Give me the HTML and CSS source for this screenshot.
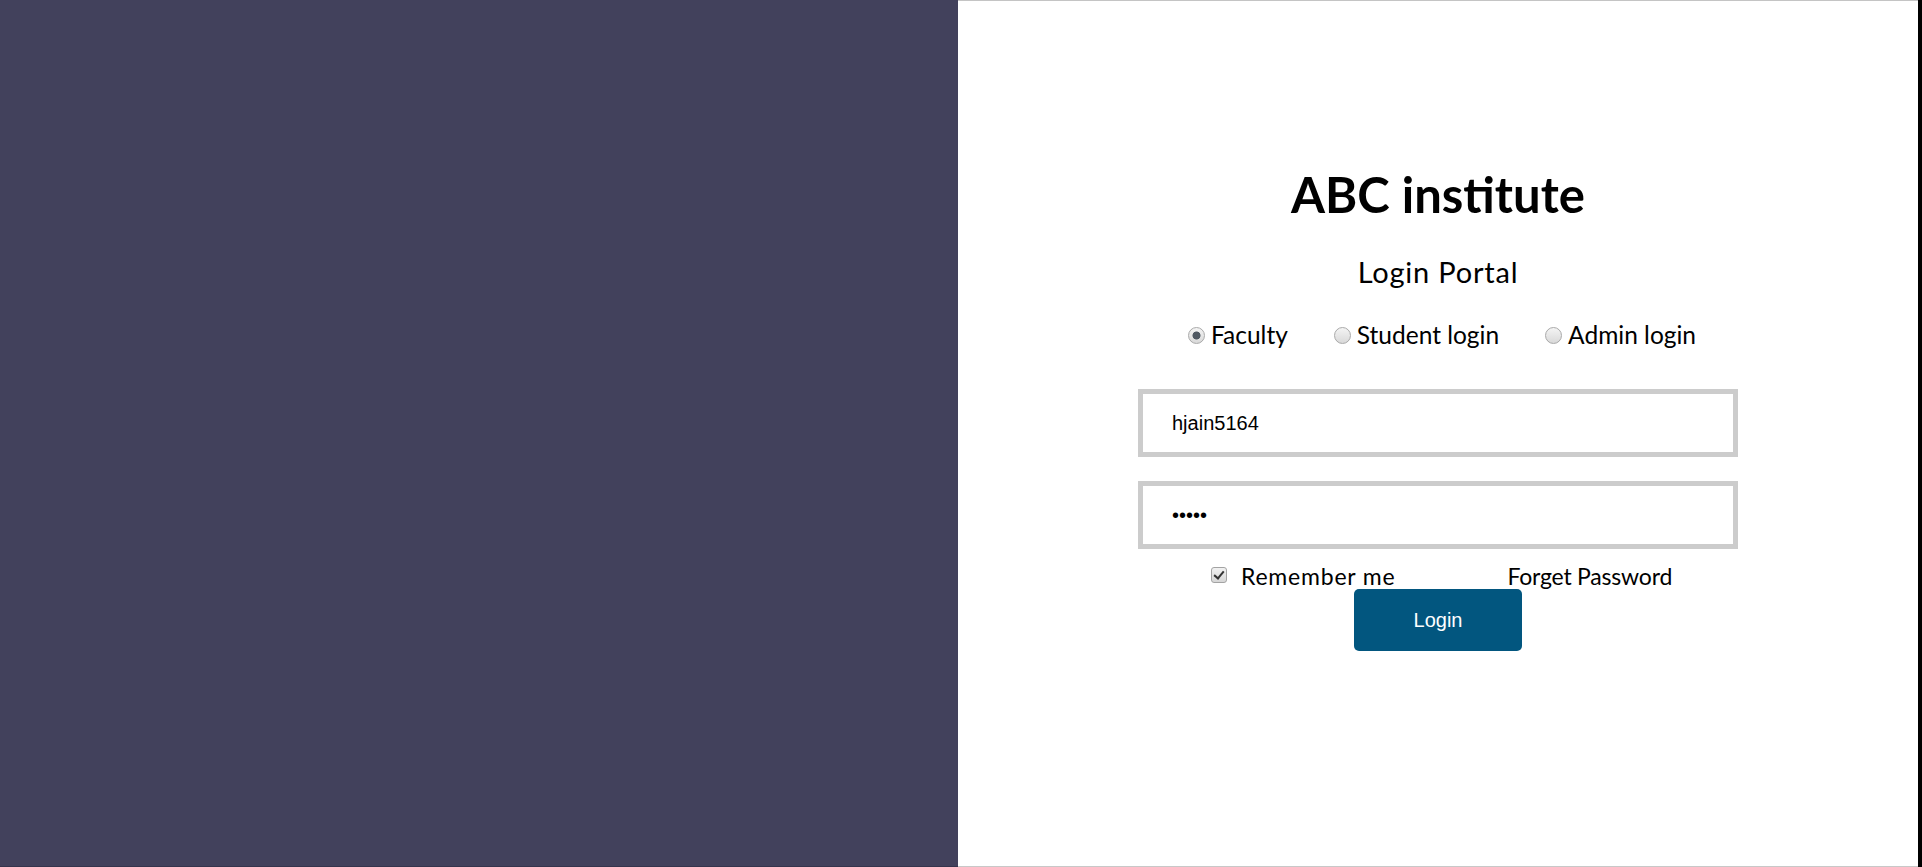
FILE: index.html
```html
<!DOCTYPE html>
<html lang="en">
<head>
<meta charset="utf-8">
<title>ABC institute - Login Portal</title>
<link rel="stylesheet" href="styles.css">
</head>
<body>
<div class="page">
  <div class="side"></div>
  <main class="panel">
    <h1 class="title">ABC institute</h1>
    <h2 class="subtitle">Login Portal</h2>
    <form class="login-form">
      <div class="roles">
        <label class="role"><input type="radio" name="role" checked><span>Faculty</span></label>
        <label class="role"><input type="radio" name="role"><span>Student login</span></label>
        <label class="role"><input type="radio" name="role"><span>Admin login</span></label>
      </div>
      <input class="field" type="text" value="hjain5164">
      <input class="field field-pass" type="password" value="abcde">
      <div class="options">
        <label class="remember"><input type="checkbox" checked><span>Remember me</span></label>
        <a class="forgot" href="#">Forget Password</a>
      </div>
      <div class="actions">
        <button class="btn" type="button">Login</button>
      </div>
    </form>
  </main>
</div>
</body>
</html>
```

FILE: styles.css
```css
html, body {
  margin: 0;
  padding: 0;
  height: 100%;
}
body {
  background: #000;
  font-family: Lato, "Open Sans", sans-serif;
  color: #000;
}
.page {
  display: flex;
  width: calc(100% - 4px);
  height: 100%;
}
.side {
  width: 958px;
  flex: none;
  background: #42415c;
  border-bottom: 1px solid #35344d;
  box-sizing: border-box;
}
.panel {
  flex: 1;
  background: #fff;
  border-top: 1px solid #c4c4c4;
  border-bottom: 1px solid #c8c8c8;
  box-sizing: border-box;
  padding-top: 163px;
  display: flex;
  flex-direction: column;
  align-items: center;
}
.title {
  margin: 0;
  font-size: 49px;
  line-height: 60px;
  font-weight: 700;
}
.subtitle {
  margin: 31px 0 0;
  font-size: 29px;
  line-height: 34px;
  font-weight: 400;
  letter-spacing: 0.8px;
}
.login-form {
  width: 600px;
  display: flex;
  flex-direction: column;
}
.roles {
  margin-top: 31px;
  display: flex;
  justify-content: center;
  gap: 46px;
  padding-left: 8px;
  font-size: 24.5px;
  line-height: 30px;
}
.role {
  display: flex;
  align-items: center;
  gap: 6px;
}
.role input {
  appearance: none;
  -webkit-appearance: none;
  margin: 0;
  width: 17px;
  height: 17px;
  border-radius: 50%;
  border: 1px solid #a9a9a9;
  box-sizing: border-box;
  background: linear-gradient(#f4f4f4, #d9d9d9);
}
.role input:checked {
  background: radial-gradient(circle, #4f5862 0 3.6px, transparent 4.4px), linear-gradient(#f4f4f4, #d9d9d9);
}
.field {
  margin: 39px 0 0;
  height: 68px;
  box-sizing: border-box;
  border: 5px solid #cccccc;
  padding: 0 29px;
  font-family: "Liberation Sans", Arial, sans-serif;
  font-size: 20px;
  color: #000;
  background: #fff;
  outline: none;
}
.field-pass {
  margin-top: 24px;
}
.options {
  margin-top: 14px;
  padding-left: 7px;
  display: flex;
  justify-content: center;
  align-items: center;
  font-size: 23px;
  line-height: 26px;
}
.remember {
  display: flex;
  align-items: center;
  gap: 14px;
}
.remember span {
  letter-spacing: 0.8px;
}
.remember input {
  appearance: none;
  -webkit-appearance: none;
  margin: 0;
  width: 16px;
  height: 16px;
  border: 1px solid #a3a3a3;
  border-radius: 3px;
  box-sizing: border-box;
  background: linear-gradient(#f2f2f2, #d6d6d6);
  position: relative;
  top: -1px;
}
.remember input:checked::after {
  content: "";
  position: absolute;
  left: 4px;
  top: 1px;
  width: 4px;
  height: 8px;
  border: solid #333;
  border-width: 0 2px 2px 0;
  transform: rotate(40deg);
}
.forgot {
  margin-left: 112px;
  color: #000;
  text-decoration: none;
  letter-spacing: -0.2px;
}
.actions {
  margin-top: 0;
  display: flex;
  justify-content: center;
}
.btn {
  width: 168px;
  height: 62px;
  border: none;
  border-radius: 5px;
  background: #02567f;
  color: #fff;
  font-family: "Liberation Sans", Arial, sans-serif;
  font-size: 20px;
  cursor: pointer;
}
```
